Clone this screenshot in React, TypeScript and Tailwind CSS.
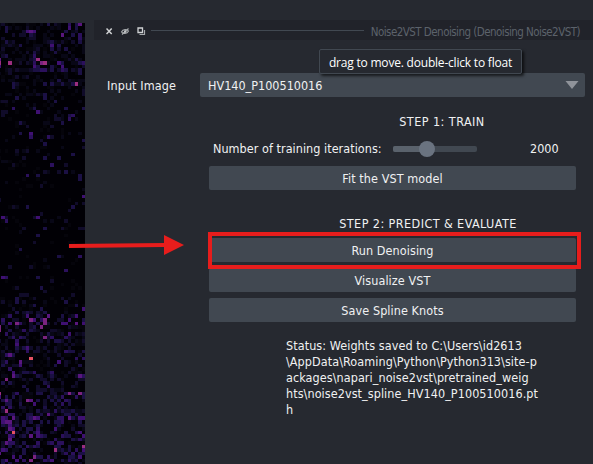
import React from "react";

const PALETTE = ["#05040b", "#080716", "#100b29", "#1b1044", "#2b105c", "#3f1072", "#59167e", "#7a2380", "#9c2e7f", "#e75263"];

// Pixels of the microscopy layer: x, y, palette level (thirds of a screen pixel).
const UPPER =
  "6,73,2 18,83,3 18,93,3 40,102,2 28,83,1 60,102,2 71,102,2 81,93,5 92,93,6 102,93,5 70,93,2 81,83,2 92,102,3 103,102,2 102,113,2 145,73,3 166,73,2 177,83,1 208,73,4 208,83,5 198,93,3 187,103,6 219,93,1 229,83,3 229,73,3 240,73,6 229,93,2 240,103,4 240,113,4 240,124,3 219,103,3 208,113,2 198,113,1 187,124,2 219,124,2 229,134,1 250,134,1 155,124,3 155,134,5 145,124,2 134,124,1 155,145,3 166,155,3 177,134,3 177,145,2 198,145,3 208,155,2 60,134,3 39,124,2 39,134,1 18,124,3 6,113,2 6,134,1 6,145,2 28,134,2 81,124,1 92,113,2 102,155,3 102,166,4 113,145,2 124,134,1 81,155,2 60,155,1 50,145,1 6,166,2 18,166,3 1,176,6 1,187,8 1,198,5 28,187,8 28,176,1 28,208,2 18,208,1 28,219,2 50,208,2 50,231,2 60,187,2 71,176,1 81,187,2 92,176,2 102,176,3 113,176,8 102,187,4 124,187,7 134,187,8 102,198,5 113,198,3 92,208,2 102,208,3 113,208,3 124,208,4 134,208,4 155,208,3 155,198,3 145,187,1 166,176,1 177,187,5 187,198,5 187,208,4 198,208,3 177,208,2 187,187,3 198,166,1 208,176,2 219,187,1 229,176,3 240,187,3 250,187,4 250,198,2 240,208,3 229,208,1 219,208,2 198,219,1 240,219,3 177,241,3 187,252,3 208,241,2 229,252,8 219,252,3 219,241,1 198,231,1 155,252,3 134,252,3 124,241,1 113,231,1 103,241,1 81,231,2 39,252,3 50,252,2 39,262,3 50,262,1 6,241,1 28,241,1 71,231,1 250,272,2 250,283,2 229,272,1 177,272,1 155,272,1 134,283,3 134,294,3 166,283,1 124,283,1 113,283,2 103,272,1 50,294,3 71,294,1 18,283,1 6,305,2 18,305,2 81,283,1 145,304,1 166,304,3 155,315,1 187,294,1 39,325,4 39,304,1 81,315,1 102,325,3 113,336,5 6,336,2 18,336,2 6,347,2 198,325,3 250,325,3 166,347,2 208,347,3 219,347,4 208,357,4 187,367,3 177,357,2 166,357,2 229,357,1 60,368,3 71,368,1 81,379,2 145,368,1 155,379,2 134,368,1 60,400,3 92,400,5 92,410,4 145,410,4 155,410,2 208,400,1 187,410,1 240,400,1 124,421,2 134,432,3 250,421,3 250,442,2 18,421,1 39,410,1 50,453,2 50,463,1 71,453,1 81,453,2 113,453,1 71,474,2 134,474,3 145,463,1 177,474,3 187,442,1 219,463,3 6,484,1 18,484,1 155,495,4 39,495,2 145,516,1 134,516,2 177,516,2 198,495,2 198,516,3 219,516,1 81,527,4 113,527,3 124,559,2 134,549,1 18,548,1 240,527,3 240,538,3 250,591,5 250,611,2 229,611,2 219,622,3 208,632,2 250,570,1 81,622,3 39,622,2 50,622,1 1,602,2 6,654,5 18,654,2 18,664,4 113,654,5 103,654,2 124,643,2 134,664,1 155,664,1 177,653,1 198,664,2 71,686,2 134,686,3 187,686,2 240,686,2 250,686,2";
const LOWER =
  "60,3,1 113,12,3 102,33,2 60,54,3 177,75,3 187,75,1 240,75,4 134,85,1 198,117,4 92,106,2 28,106,2 145,106,1 6,138,5 18,138,4 113,138,3 155,149,2 50,170,2 124,170,3 134,180,2 60,192,2 71,192,2 81,192,2 50,202,3 50,212,3 71,212,2 219,192,2 198,212,3 208,202,1 6,212,2 28,223,1 39,234,2 102,202,2 134,212,1 92,223,1 103,223,3 187,202,2 250,234,5 229,223,3 28,255,4 50,244,3 71,244,2 81,244,3 81,255,5 92,265,7 103,265,5 113,255,3 124,265,4 134,265,7 134,276,7 145,255,6 124,286,7 103,286,3 113,276,3 1,286,7 1,296,7 6,276,3 6,265,4 28,276,5 50,276,7 60,276,4 18,286,2 28,296,3 50,286,2 39,265,2 71,255,1 92,244,2 113,244,2 124,234,3 134,244,3 187,276,5 198,276,5 208,265,5 229,276,6 250,276,5 229,255,5 250,265,3 177,265,2 166,276,2 187,255,3 208,308,5 134,319,7 155,319,4 145,308,3 124,308,2 18,308,4 39,319,4 60,319,4 50,329,4 71,319,3 92,296,3 71,296,4 81,308,2 198,319,4 187,308,2 166,329,3 177,329,3 208,319,2 229,308,2 50,340,5 50,351,3 81,351,5 81,361,4 71,351,3 92,382,9 28,372,6 18,372,4 39,372,3 60,393,6 60,403,5 18,393,4 6,403,3 28,414,4 177,393,5 166,403,3 187,382,2 198,361,4 208,361,3 219,361,3 229,382,4 250,382,4 240,403,3 250,361,3 39,425,5 39,435,6 18,446,7 6,456,3 28,456,3 50,435,3 71,425,3 81,425,3 103,425,4 113,435,3 155,425,4 155,435,3 134,456,3 145,467,4 124,446,2 177,446,2 187,456,2 240,435,6 250,435,4 240,446,2 1,488,8 1,499,5 18,509,6 18,520,3 18,541,8 6,530,4 28,530,4 50,488,4 60,499,2 71,467,3 81,509,7 92,509,6 102,520,5 124,488,3 134,520,2 145,499,3 155,478,2 208,488,7 240,488,7 229,499,4 219,488,3 187,499,4 198,488,3 177,509,3 187,520,4 198,509,4 145,551,6 166,520,3 6,562,5 6,572,5 18,562,4 18,572,6 28,572,6 39,562,6 28,551,4 39,551,4 102,562,6 113,562,5 92,562,4 124,572,3 124,551,3 71,572,3 81,562,3 177,562,4 187,562,4 208,562,6 219,562,3 240,562,5 250,562,5 229,551,3 166,541,4 187,541,3 219,541,3 187,572,4 177,572,3 198,551,3 166,594,5 177,583,3 39,604,9 28,593,6 39,593,5 28,583,5 18,604,4 28,614,5 39,614,4 28,625,6 18,635,6 28,635,4 39,635,4 28,646,3 92,614,6 113,593,4 113,604,5 113,614,5 103,604,3 124,614,4 81,604,3 81,593,3 71,614,3 113,635,4 102,646,4 81,646,4 71,635,3 6,656,5 18,656,4 1,667,6 102,679,7 92,690,7 113,679,3 166,658,8 155,635,4 145,635,3 166,625,4 187,614,4 198,604,3 208,614,3 177,635,4 187,635,4 177,646,3 187,656,3 198,667,4 208,656,3 219,667,4 240,604,5 250,614,5 229,604,3 240,625,4 250,646,8 250,656,5 229,656,4 240,679,5 219,679,3 208,690,4 187,690,3 155,690,5 145,679,4 134,690,4 124,679,3 50,690,5 60,679,4 71,690,4 39,679,5 18,690,5 6,690,3";

const PITCH = 3.518;

function buildPixels() {
  const cells = new Map<string, number>();
  let seed = 4711;
  const rnd = () => {
    seed = (seed * 1664525 + 1013904223) >>> 0;
    return seed / 4294967296;
  };
  for (let r = -1; r < 126; r++) {
    for (let c = -1; c < 24; c++) {
      const y = 26 + r * PITCH;
      const density = y < 88 ? 0.25 : y < 120 ? 0.12 : y < 295 ? 0.06 : y < 315 ? 0.2 : y < 385 ? 0.4 : 0.5;
      const top = y < 120 ? 2 : y < 310 ? 1 : y < 385 ? 3 : 4;
      const hit = rnd() < density;
      const level = Math.floor(rnd() * top);
      if (hit) cells.set(`${c},${r}`, level);
    }
  }
  const place = (list: string, offset: number) =>
    list.split(" ").forEach((item) => {
      const [x, y, level] = item.split(",").map(Number);
      const c = Math.floor((x / 3 - 1) / PITCH);
      const r = Math.floor((y / 3 + offset - 26) / PITCH);
      cells.set(`${c},${r}`, level);
    });
  place(UPPER, 0);
  place(LOWER, 232);
  return [...cells].map(([key, level]) => {
    const [c, r] = key.split(",").map(Number);
    const x = Math.round(1 + c * PITCH);
    const y = Math.round(3 + r * PITCH);
    return { x, y, w: Math.round(1 + (c + 1) * PITCH) - x, h: Math.round(3 + (r + 1) * PITCH) - y, level };
  });
}

const pixels = buildPixels();

function ImageCanvas() {
  return (
    <svg width="85" height="441" viewBox="0 0 85 441" shapeRendering="crispEdges" className="block">
      <rect width="85" height="441" fill="#010005" />
      {pixels.map((p) => (
        <rect key={`${p.x}-${p.y}`} x={p.x} y={p.y} width={p.w} height={p.h} fill={PALETTE[p.level]} />
      ))}
    </svg>
  );
}

function Button({ children }: { children: React.ReactNode }) {
  return (
    <button className="flex h-6 w-full items-center justify-center rounded-[2px] bg-[#414851] pt-0.5 tracking-[0.08px] text-[#f0f1f2]">
      {children}
    </button>
  );
}

function TitleBar() {
  return (
    <div className="flex h-5 items-center bg-[#21232a] pl-3 pr-[13px]">
      <svg width="40" height="10" viewBox="0 0 40 10" className="mt-px shrink-0" fill="none" stroke="#d0d2d4">
        <path d="M0.500 2.500 5.700 8M5.700 2.500 0.500 8" strokeWidth="1.500" />
        <path d="M15.500 6c1.500-3 5.500-3 7-1-1.500 3-5.500 3-7 1ZM16 8.500 22.500 2.500" strokeWidth="1.200" stroke="#a5a8ab" />
        <circle cx="19.200" cy="5.500" r="1.200" fill="#c5c7c9" stroke="none" />
        <path d="M32 2h4.500v4.500H32z" strokeWidth="1.300" />
        <path d="M33.500 8.500h5V4" strokeWidth="1.200" stroke="#a5a8ab" />
      </svg>
      <div className="ml-[5px] mt-px h-px w-[213px] shrink-0 bg-[#414851]" />
      <span className="ml-auto mt-1 whitespace-nowrap text-[11.5px] tracking-[-0.54px] text-[#5c626b]">Noise2VST Denoising (Denoising Noise2VST)</span>
    </div>
  );
}

export default function App() {
  return (
    <div className="relative flex h-[464px] w-[593px] overflow-hidden bg-[#262930] font-['DejaVu_Sans_Condensed','DejaVu_Sans',sans-serif] text-[12.5px] leading-4 text-[#f0f1f2]">
      <div className="w-[85px] shrink-0 pt-[23px]">
        <ImageCanvas />
      </div>
      <div className="ml-[9px] flex w-[499px] flex-col pt-5">
        <TitleBar />
        <div className="mt-[33px] flex h-6 items-center pl-[13px]">
          <label className="w-[93px] pt-0.5 tracking-[0.1px]">Input Image</label>
          <div className="flex h-6 w-[385px] items-center justify-between rounded-[2px] bg-[#414851] pl-2 pr-[6px]">
            <span className="pt-0.5">HV140_P100510016</span>
            <svg width="14" height="8" viewBox="0 0 14 8"><path d="M0.500 0h13L7 8Z" fill="#8f939a" /></svg>
          </div>
        </div>
        <div className="ml-[115px] flex w-[367px] flex-col">
          <div className="mt-[17px] pl-[99px] text-center tracking-[0.45px]">STEP 1: TRAIN</div>
          <div className="mt-[9px] flex h-5 items-center pl-1">
            <span className="w-[180px] whitespace-nowrap tracking-[0.04px]">Number of training iterations:</span>
            <div className="flex h-1.5 w-[84px] items-center rounded-[2px] bg-[#414851]">
              <div className="h-1.5 w-[30px] rounded-l-[2px] bg-[#5a626c]" />
              <div className="-ml-1 h-4 w-4 shrink-0 rounded-full bg-[#6a7380]" />
            </div>
            <span className="ml-[53px]">2000</span>
          </div>
          <div className="mt-[7px]"><Button>Fit the VST model</Button></div>
          <div className="mt-[26px] pl-[71px] text-center tracking-[0.42px]">STEP 2: PREDICT &amp; EVALUATE</div>
          <div className="mt-1.5 flex flex-col gap-1.5">
            <Button>Run Denoising</Button>
            <Button>Visualize VST</Button>
            <Button>Save Spline Knots</Button>
          </div>
          <p className="ml-[77px] mt-4 whitespace-nowrap tracking-[0.07px]">
            Status: Weights saved to C:\Users\id2613<br />
            \AppData\Roaming\Python\Python313\site-p<br />
            ackages\napari_noise2vst\pretrained_weig<br />
            hts\noise2vst_spline_HV140_P100510016.pt<br />h
          </p>
        </div>
      </div>
      <div className="absolute left-[319px] top-[49px] flex h-[25px] w-[203px] items-center justify-center whitespace-nowrap rounded-[2px] border border-[#414851] bg-[#262930] pt-0.5 font-['Open_Sans',sans-serif] text-[12px] tracking-[-0.2px] text-white shadow-[2px_2px_3px_rgba(0,0,0,0.65)]">
        drag to move. double-click to float
      </div>
      <div className="absolute left-[208px] top-[232px] h-[37px] w-[373px] border-4 border-[#e71d1c]" />
      <svg className="absolute left-[69px] top-[234px]" width="116" height="22" viewBox="0 0 116 22" fill="#e71d1c">
        <path d="M0 10 95 9V1l20 10-20 10v-8L0 14Z" />
      </svg>
    </div>
  );
}
